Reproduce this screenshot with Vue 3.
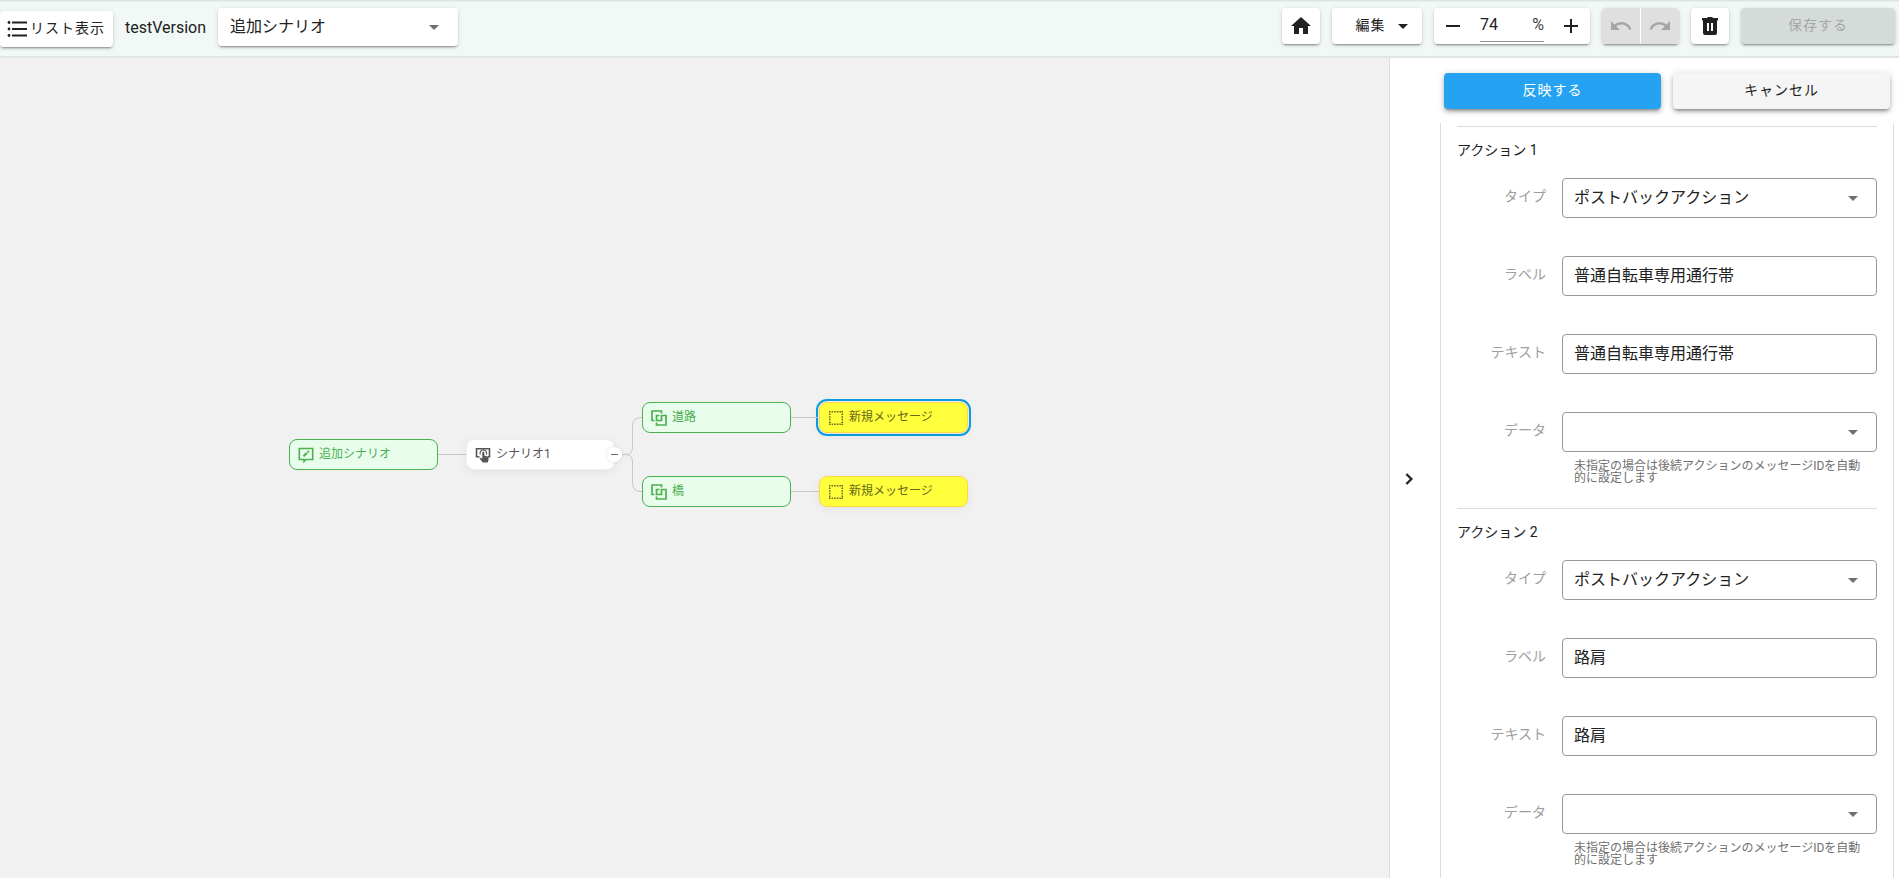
<script setup>
import { ref, reactive } from 'vue'

const scenario = ref('追加シナリオ')
const zoom = ref('74')

const hint = '未指定の場合は後続アクションのメッセージIDを自動的に設定します'
const actions = reactive([
  { id: 1, type: 'ポストバックアクション', label: '普通自転車専用通行帯', text: '普通自転車専用通行帯', data: '' },
  { id: 2, type: 'ポストバックアクション', label: '路肩', text: '路肩', data: '' },
])

const nodes = [
  { id: 'root', kind: 'green', icon: 'edit', text: '追加シナリオ', x: 289, y: 381 },
  { id: 'scenario', kind: 'white', icon: 'tap', text: 'シナリオ1', x: 466, y: 381 },
  { id: 'road', kind: 'green', icon: 'copy', text: '道路', x: 642, y: 344 },
  { id: 'bridge', kind: 'green', icon: 'copy', text: '橋', x: 642, y: 418 },
  { id: 'msg1', kind: 'yellow', icon: 'box', text: '新規メッセージ', x: 819, y: 344, selected: true },
  { id: 'msg2', kind: 'yellow', icon: 'box', text: '新規メッセージ', x: 819, y: 418 },
]
</script>

<template>
  <div class="app">
    <header class="bar">
      <button class="btn list-btn" type="button">
        <svg width="24" height="24" viewBox="0 0 24 24" fill="currentColor">
          <path d="M7 4.500H22V6.500H7ZM7 11H22V13H7ZM7 17.500H22V19.500H7Z" />
          <circle cx="4" cy="5.500" r="1.400" /><circle cx="4" cy="12" r="1.400" /><circle cx="4" cy="18.500" r="1.400" />
        </svg>
        <span>リスト表示</span>
      </button>
      <span class="version">testVersion</span>
      <div class="picker scenario">
        <select v-model="scenario" aria-label="シナリオ">
          <option>追加シナリオ</option>
        </select>
        <svg width="24" height="24" viewBox="0 0 24 24" fill="currentColor"><path d="M7 10l5 5 5-5z" /></svg>
      </div>
      <div class="tools">
        <button class="btn square" type="button" aria-label="ホーム">
          <svg width="24" height="24" viewBox="0 0 24 24" fill="currentColor"><path d="M10 20V14H14V20H19V12H22L12 3L2 12H5V20H10Z" /></svg>
        </button>
        <button class="btn edit" type="button">
          <span>編集</span>
          <svg width="24" height="24" viewBox="0 0 24 24" fill="currentColor"><path d="M7 10l5 5 5-5z" /></svg>
        </button>
        <div class="zoom">
          <button type="button" aria-label="縮小">
            <svg width="24" height="24" viewBox="0 0 24 24" fill="currentColor"><path d="M19 13H5V11H19Z" /></svg>
          </button>
          <label class="zoom-field">
            <input v-model="zoom" type="text" aria-label="倍率" />
            <span>%</span>
          </label>
          <button type="button" aria-label="拡大">
            <svg width="24" height="24" viewBox="0 0 24 24" fill="currentColor"><path d="M19 13H13V19H11V13H5V11H11V5H13V11H19Z" /></svg>
          </button>
        </div>
        <div class="history">
          <button type="button" aria-label="元に戻す" disabled>
            <svg width="24" height="24" viewBox="0 0 24 24" fill="currentColor"><path d="M12.500 8C9.850 8 7.450 9 5.600 10.600L2 7V16H11L7.380 12.380C8.770 11.220 10.540 10.500 12.500 10.500C16.040 10.500 19.050 12.810 20.100 16L22.470 15.220C21.080 11.030 17.150 8 12.500 8Z" /></svg>
          </button>
          <button type="button" aria-label="やり直す" disabled>
            <svg width="24" height="24" viewBox="0 0 24 24" fill="currentColor"><path d="M18.400 10.600C16.550 9 14.150 8 11.500 8C6.850 8 2.920 11.030 1.540 15.220L3.900 16C4.950 12.810 7.950 10.500 11.500 10.500C13.450 10.500 15.230 11.220 16.620 12.380L13 16H22V7L18.400 10.600Z" /></svg>
          </button>
        </div>
        <button class="btn square" type="button" aria-label="削除">
          <svg width="24" height="24" viewBox="0 0 24 24" fill="currentColor" fill-rule="evenodd">
            <path d="M4 4H9L10 3H14L15 4H20V6.500H4ZM5 7.500H19V19A2 2 0 0 1 17 21H7A2 2 0 0 1 5 19ZM9 9V17H11V9ZM13 9V17H15V9Z" />
            <path d="M5 6H19V8H5Z" />
          </svg>
        </button>
        <button class="btn save" type="button" disabled>保存する</button>
      </div>
    </header>

    <main class="work">
      <section class="canvas">
        <svg class="links" width="980" height="460" fill="none" stroke="#c8c8c8">
          <path d="M438 396.500H466M614 396.500H626Q632.500 396.500 632.500 389V368Q632.500 359.500 641 359.500H642M626 396.500Q632.500 396.500 632.500 404V425Q632.500 433.500 641 433.500H642M791 433.500H819" />
        </svg>
        <div
          v-for="n in nodes"
          :key="n.id"
          class="node"
          :class="[n.kind, { selected: n.selected }]"
          :style="{ left: n.x + 'px', top: n.y + 'px' }"
        >
          <svg v-if="n.icon === 'edit'" width="16" height="16" viewBox="0 0 16 16" fill="none" stroke="currentColor" stroke-width="1.600">
            <path d="M1.300 1.500H14.700V12.500H8L6 14.500V12.500H1.300Z" />
            <path d="M5.500 9.300L9 5.800M9.700 5.100L10.800 4" stroke-width="2.200" />
          </svg>
          <svg v-else-if="n.icon === 'tap'" width="16" height="16" viewBox="0 0 16 16" fill="none" stroke="currentColor">
            <path d="M4.500 9.700H1.500V1.700H14.500V9.700H12.500" stroke-width="1.600" />
            <path d="M5.300 7.500A3.300 3.300 0 1 1 11.300 7.500" stroke-width="1.100" />
            <path d="M7.300 5.200Q8.300 4 9.300 5.200V8.500L13.500 10V13L12.700 15.500H7.800L4.500 11.500L5.300 10.800L7.300 11.800Z" fill="currentColor" stroke="none" />
          </svg>
          <svg v-else-if="n.icon === 'copy'" width="16" height="16" viewBox="0 0 16 16" fill="none" stroke="currentColor" stroke-width="1.700">
            <path d="M3.500 10.500H1V1H10.500V3.500M8.500 5.500H5.500V10.500H10.500V5.500H15V15H5.500V12.500" />
          </svg>
          <svg v-else width="16" height="16" viewBox="0 0 16 16" fill="none" stroke="currentColor" stroke-width="1.500" stroke-dasharray="1.500 1.100">
            <path d="M1 1.750H15M1 14.250H15M1.750 1V15M14.250 1V15" />
          </svg>
          <span>{{ n.text }}</span>
        </div>
        <svg class="links" width="980" height="460" fill="none" stroke="#c8c8c8">
          <path d="M791 359.500H820" />
        </svg>
        <button class="fold" type="button" aria-label="折りたたむ">
          <svg width="15" height="15" viewBox="0 0 15 15" stroke="#666"><path d="M4 7.500H11" /></svg>
        </button>
      </section>

      <aside class="panel">
        <button class="collapse" type="button" aria-label="パネルを閉じる">
          <svg width="22" height="22" viewBox="0 0 24 24" fill="currentColor"><path d="M8.590 16.580L13.170 12L8.590 7.410L10 6L16 12L10 18Z" stroke="currentColor" stroke-width="0.600" /></svg>
        </button>
        <div class="side">
          <div class="confirm">
            <button class="btn apply" type="button">反映する</button>
            <button class="btn cancel" type="button">キャンセル</button>
          </div>
          <form class="list" @submit.prevent>
            <section v-for="a in actions" :key="a.id" class="action">
              <h2>アクション {{ a.id }}</h2>
              <div class="row">
                <label :for="'type' + a.id">タイプ</label>
                <div class="picker">
                  <select :id="'type' + a.id" v-model="a.type"><option>ポストバックアクション</option></select>
                  <svg width="24" height="24" viewBox="0 0 24 24" fill="currentColor"><path d="M7 10l5 5 5-5z" /></svg>
                </div>
              </div>
              <div class="row">
                <label :for="'label' + a.id">ラベル</label>
                <input :id="'label' + a.id" v-model="a.label" type="text" />
              </div>
              <div class="row">
                <label :for="'text' + a.id">テキスト</label>
                <input :id="'text' + a.id" v-model="a.text" type="text" />
              </div>
              <div class="row">
                <label :for="'data' + a.id">データ</label>
                <div class="picker">
                  <select :id="'data' + a.id" v-model="a.data"><option value=""></option></select>
                  <svg width="24" height="24" viewBox="0 0 24 24" fill="currentColor"><path d="M7 10l5 5 5-5z" /></svg>
                </div>
                <p>{{ hint }}</p>
              </div>
            </section>
          </form>
        </div>
      </aside>
    </main>
  </div>
</template>

<style>
body {
  margin: 0;
}
</style>

<style scoped>
.app {
  display: flex;
  flex-direction: column;
  height: 100vh;
  overflow: hidden;
  background: #f1f1f1;
  color: #212121;
  font-family: Roboto, "Noto Sans CJK JP", sans-serif;
  font-size: 16px;
}
.app * {
  box-sizing: border-box;
}
svg {
  display: block;
  flex: none;
}
button,
input,
select {
  margin: 0;
  padding: 0;
  border: 0;
  outline: 0;
  background: none;
  color: inherit;
  font: inherit;
}
button {
  display: flex;
  align-items: center;
  justify-content: center;
}
.bar {
  display: flex;
  align-items: flex-start;
  gap: 12px;
  flex: none;
  height: 58px;
  padding: 8px 4px 0 0;
  border-bottom: 2px solid #e0e6e3;
  background: #f2f8f6;
  box-shadow: inset 0 2px 2px -1px #d5dbd9;
}
.btn,
.zoom,
.history,
.scenario {
  border-radius: 4px;
  background: #fff;
  box-shadow: 0 3px 1px -2px rgba(0, 0, 0, 0.2), 0 2px 2px rgba(0, 0, 0, 0.14), 0 1px 5px rgba(0, 0, 0, 0.12);
}
.btn {
  height: 36px;
  font-size: 14px;
  line-height: 20px;
  letter-spacing: 1px;
}
.btn span {
  padding-bottom: 2px;
}
.list-btn {
  margin-top: 3px;
  padding: 0 8px 0 5px;
  gap: 1px;
}
.version {
  line-height: 40px;
}
.picker {
  display: grid;
  align-items: center;
}
.picker > * {
  grid-area: 1 / 1;
}
.picker > svg {
  justify-self: end;
  margin-right: 11px;
  color: #707070;
  pointer-events: none;
}
.picker select {
  width: 100%;
  height: 38px;
  padding: 0 11px 1px;
  appearance: none;
}
.scenario {
  width: 240px;
}
.scenario > svg {
  margin-right: 12px;
}
.scenario select {
  padding: 0 12px 1px;
}
.tools {
  display: flex;
  gap: 12px;
  margin-left: auto;
}
.square {
  width: 38px;
}
.edit {
  width: 90px;
  padding-left: 16px;
  gap: 5px;
}
.zoom {
  display: flex;
  justify-content: space-between;
  width: 156px;
  height: 36px;
}
.zoom button {
  width: 38px;
}
.zoom-field {
  display: flex;
  align-items: center;
  width: 64px;
  height: 34px;
  border-bottom: 1px solid #949494;
}
.zoom-field input {
  flex: 1;
  min-width: 0;
}
.zoom-field span {
  color: #424242;
}
.history {
  display: flex;
  gap: 1px;
  height: 36px;
  overflow: hidden;
}
.history button {
  width: 38px;
  background: #dfdfdf;
  color: #a6a6a6;
}
.save {
  width: 154px;
  padding-bottom: 3px;
  background: #d5dbd9;
  color: #a4a8a7;
}
.work {
  display: flex;
  flex: 1;
  min-height: 0;
}
.canvas {
  position: relative;
  flex: 1;
  overflow: hidden;
}
.links {
  position: absolute;
  top: 0;
  left: 0;
}
.node {
  position: absolute;
  display: flex;
  align-items: center;
  gap: 5px;
  width: 149px;
  height: 31px;
  padding: 0 8px;
  border: 1px solid;
  border-radius: 8px;
  font-size: 12px;
  line-height: 18px;
  white-space: nowrap;
}
.node span {
  padding-bottom: 2px;
}
.green {
  border-color: #4caf50;
  background: #e8fdeb;
  color: #4caf50;
}
.white {
  border-color: #f1f1f1;
  background: #fff;
  background-clip: padding-box;
  color: #555;
  box-shadow: 0 2px 10px rgba(0, 0, 0, 0.06);
}
.yellow {
  border-color: #ffd740;
  background: #ffff3b;
  color: #666619;
  box-shadow: 0 2px 10px rgba(0, 0, 0, 0.06);
}
.selected {
  outline: 2px solid #0a9bdc;
  outline-offset: 1px;
}
.fold {
  position: absolute;
  top: 389px;
  left: 607px;
  width: 15px;
  height: 15px;
  border-radius: 50%;
  background: #fff;
  box-shadow: 0 0 4px rgba(0, 0, 0, 0.12);
}
.panel {
  display: flex;
  width: 510px;
  border-left: 1px solid #dcdcdc;
  background: #fff;
}
.collapse {
  width: 50px;
  padding: 22px 12px 0 0;
}
.side {
  display: flex;
  flex: 1;
  flex-direction: column;
  min-width: 0;
}
.confirm {
  display: grid;
  grid-template-columns: 1fr 1fr;
  gap: 12px;
  padding: 15px 9px 14px 4px;
}
.confirm .btn {
  padding-bottom: 2px;
  box-shadow: 0 3px 3px -2px rgba(0, 0, 0, 0.3), 0 3px 4px rgba(0, 0, 0, 0.2), 0 1px 8px rgba(0, 0, 0, 0.14);
}
.confirm .apply {
  background: #25a3f2;
  color: #fff;
}
.confirm .cancel {
  background: #f5f5f5;
}
.list {
  flex: 1;
  min-height: 0;
  margin-right: 5px;
  padding: 3px 16px 0;
  overflow: auto;
  scrollbar-width: none;
  border: solid #dcdcdc;
  border-width: 0 1px;
}
.action {
  padding-bottom: 24px;
  border-top: 1px solid #dcdcdc;
}
h2 {
  margin: 0 0 18px;
  padding-top: 13px;
  font-size: 14px;
  font-weight: 400;
  line-height: 20px;
}
.row {
  display: grid;
  grid-template-columns: 89px 1fr;
  column-gap: 16px;
}
.row + .row {
  margin-top: 38px;
}
.row label {
  color: #9e9e9e;
  font-size: 14px;
  line-height: 36px;
  text-align: right;
}
.row > input,
.row .picker {
  height: 40px;
  border: 1px solid #999;
  border-radius: 4px;
}
.row > input {
  padding: 0 11px 4px;
}
.row p {
  grid-column: 2;
  margin: 8px 12px 0;
  color: #707070;
  font-size: 12px;
  line-height: 12px;
}
</style>
